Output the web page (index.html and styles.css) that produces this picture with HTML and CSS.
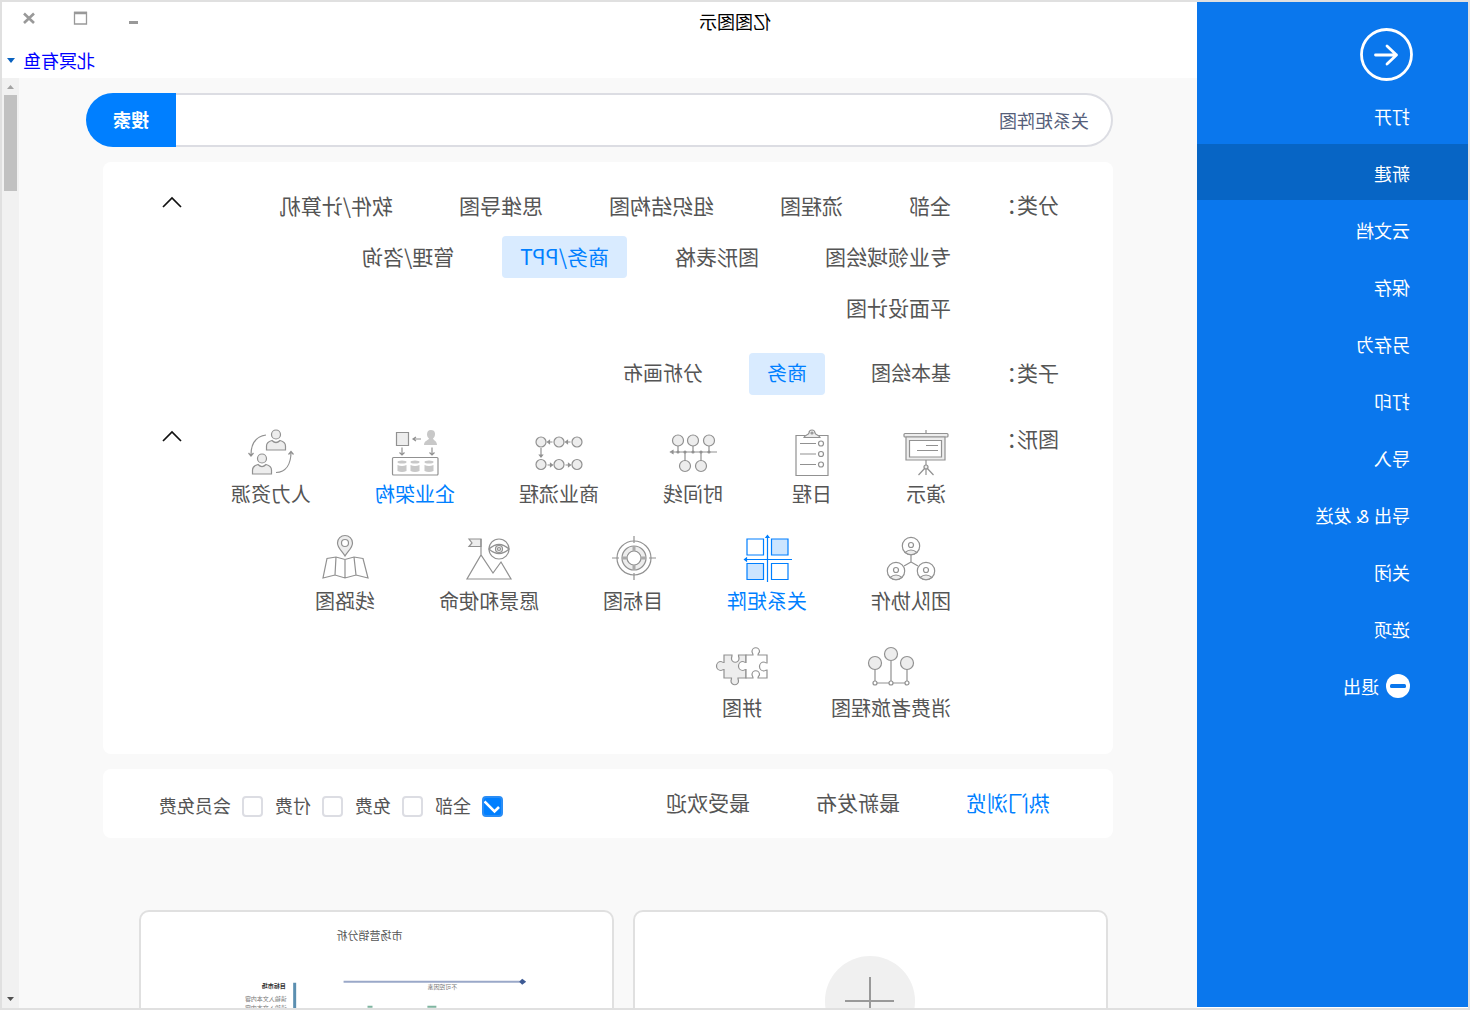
FILE: index.html
```html
<!DOCTYPE html>
<html lang="zh-CN">
<head>
<meta charset="utf-8">
<title>亿图图示</title>
<link rel="stylesheet" href="styles.css">
</head>
<body>
<div class="window">
  <nav class="sidebar" aria-label="文件">
    <button class="back" type="button" aria-label="返回">
      <svg viewBox="0 0 53 53" width="53" height="53" fill="none" stroke="#fff" stroke-width="2.800" stroke-linecap="round" stroke-linejoin="round"><circle cx="26.500" cy="26.500" r="25"/><path d="M37.500 27H16.500M26 18l-9.500 9 9.500 9"/></svg>
    </button>
    <a class="menu-item" href="#">打开</a>
    <a class="menu-item active" href="#">新建</a>
    <a class="menu-item" href="#">云文档</a>
    <a class="menu-item" href="#">保存</a>
    <a class="menu-item" href="#">另存为</a>
    <a class="menu-item" href="#">打印</a>
    <a class="menu-item" href="#">导入</a>
    <a class="menu-item" href="#">导出 &amp; 发送</a>
    <a class="menu-item" href="#">关闭</a>
    <a class="menu-item" href="#">选项</a>
    <a class="menu-item" href="#"><svg viewBox="0 0 24 24" width="24" height="24"><circle cx="12" cy="12" r="12" fill="#fff"/><rect x="4" y="10" width="16" height="4" rx="1.500" fill="#0a77ed"/></svg>退出</a>
  </nav>

  <div class="main">
    <header class="titlebar">
      <div class="title-row">
        <h1 class="title">亿图图示</h1>
        <div class="controls">
          <button type="button" aria-label="最小化"><svg viewBox="0 0 16 16" width="16" height="16"><path d="M3 11h9v3H3z" fill="#999"/></svg></button>
          <button type="button" aria-label="最大化"><svg viewBox="0 0 16 16" width="16" height="16" fill="none" stroke="#999"><path d="M2.500 2.500h12v11.500h-12z" stroke-width="1.300"/><path d="M2 3h13" stroke-width="2.500"/></svg></button>
          <button type="button" aria-label="关闭"><svg viewBox="0 0 16 16" width="16" height="16" fill="none" stroke="#999" stroke-width="2.600"><path d="M3 3.500l10 9.500M13 3.500L3 13"/></svg></button>
        </div>
      </div>
      <div class="user-row">
        <a class="user" href="#">北冥有鱼</a>
        <svg viewBox="0 0 8 5" width="8" height="5"><path d="M0 0h8L4 5z" fill="#0a62c0"/></svg>
      </div>
    </header>

    <div class="viewport">
      <main class="content">
        <form class="search">
          <input class="search-input" type="text" value="关系矩阵图" aria-label="搜索模板">
          <button class="search-button" type="button">搜索</button>
        </form>

        <section class="panel filters">
          <div class="filter-row">
            <h2 class="filter-label">分类：</h2>
            <div class="chips">
              <button class="chip" type="button">全部</button>
              <button class="chip" type="button">流程图</button>
              <button class="chip" type="button">组织结构图</button>
              <button class="chip" type="button">思维导图</button>
              <button class="chip" type="button">软件/计算机</button>
              <button class="chip" type="button">专业领域绘图</button>
              <button class="chip" type="button">图形表格</button>
              <button class="chip selected" type="button">商务/PPT</button>
              <button class="chip" type="button">管理/咨询</button>
              <button class="chip" type="button">平面设计图</button>
            </div>
            <button class="fold" type="button" aria-label="收起分类"><svg viewBox="0 0 20 12" width="20" height="12" fill="none" stroke="#111" stroke-width="1.700"><path d="M1 11l9-9 9 9"/></svg></button>
          </div>

          <div class="filter-row">
            <h2 class="filter-label">子类：</h2>
            <div class="chips small">
              <button class="chip" type="button">基本绘图</button>
              <button class="chip selected" type="button">商务</button>
              <button class="chip" type="button">分析画布</button>
            </div>
          </div>

          <div class="filter-row">
            <h2 class="filter-label">图形：</h2>
            <div class="shapes">
              <button class="shape" type="button">
                <svg class="icon" viewBox="0 0 50 50"><path d="M25 2v4"/><rect x="3" y="5.500" width="44" height="3.500" rx="1" class="soft"/><path class="soft" d="M6 9h39v23H6z"/><path fill="#fff" d="M9.500 12.500h32v16.500h-32z"/><path d="M13 17.500h12M13 22.500h21M25 32v15M25 39l-7.500 8M25 39l7.500 8"/><circle class="soft" cx="25" cy="39" r="2"/></svg>演示</button>
              <button class="shape" type="button">
                <svg class="icon" viewBox="0 0 50 50"><path d="M9 7.500h32v40H9z"/><path class="soft" d="M17 9.500c1-3 4-2 5-4.500a3 3 0 0 1 6 0c1 2.500 4 1.500 5 4.500z"/><circle cx="25" cy="5" r="1"/><circle cx="16" cy="15.500" r="2.500"/><circle cx="16" cy="26" r="2.500"/><circle cx="16" cy="36.500" r="2.500"/><path d="M21 15.500h16M21 26h16M21 36.500h16"/></svg>日程</button>
              <button class="shape" type="button">
                <svg class="icon" viewBox="0 0 50 50"><path d="M1 24h45M9 18v6M25 18v6M40 18v6M17 24v9M33 24v9"/><g class="soft"><circle cx="9" cy="12.500" r="5.500"/><circle cx="25" cy="12.500" r="5.500"/><circle cx="40" cy="12.500" r="5.500"/><circle cx="17" cy="38" r="5.500"/><circle cx="33" cy="38" r="5.500"/></g><g class="solid"><circle cx="9" cy="24" r="1"/><circle cx="17" cy="24" r="1"/><circle cx="25" cy="24" r="1"/><circle cx="33" cy="24" r="1"/><circle cx="40" cy="24" r="1"/><path d="M45 22.500l2.500 1.500-2.500 1.500z"/></g></svg>时间线</button>
              <button class="shape" type="button">
                <svg class="icon" viewBox="0 0 50 50"><g class="soft"><circle cx="7" cy="14" r="5"/><circle cx="25" cy="14" r="5"/><circle cx="43" cy="14" r="5"/><circle cx="7" cy="36.500" r="5"/><circle cx="25" cy="36.500" r="5"/><circle cx="43" cy="36.500" r="5"/></g><path d="M13.500 14h4M31.500 14h4M43 20v7M36.500 37h-4M18.500 37h-4"/><g class="solid"><path d="M16.500 12.500l2 1.500-2 1.500zM34.500 12.500l2 1.500-2 1.500zM41.500 27h3L43 29zM33.500 35.500l-2 1.500 2 1.500zM15.500 35.500l-2 1.500 2 1.500z"/></g></svg>商业流程</button>
              <button class="shape linked" type="button">
                <svg class="icon" viewBox="0 0 50 50"><path class="soft" d="M31.500 4.500h12v13h-12z"/><path d="M19 11h7M24 9l3 2-3 2M38 19.500v7M35.500 24.500L38 27l2.500-2.500M8 19.500v7M5.500 24.500L8 27l2.500-2.500"/><rect x="2" y="29.500" width="45.500" height="17.500" rx="1"/><g class="shade"><path d="M9 2c3 0 4 2 4 4.500 0 2-1 3-2 4 0 1.500 5 2 5 6.500H3c0-4 4-5 4-6.500C5 9 5 7 5 5.500 5 3 7 2 9 2z"/><ellipse cx="11" cy="34" rx="4.500" ry="1.500"/><ellipse cx="25" cy="34" rx="4.500" ry="1.500"/><ellipse cx="38" cy="34" rx="4.500" ry="1.500"/><path d="M6.500 37q4.500 2 9 0v6q-4.500 2-9 0zM20.500 37q4.500 2 9 0v6q-4.500 2-9 0zM33.500 37q4.500 2 9 0v6q-4.500 2-9 0z"/></g></svg>企业架构</button>
              <button class="shape" type="button">
                <svg class="icon" viewBox="0 0 50 50"><g class="soft"><circle cx="20" cy="6.500" r="4.500"/><circle cx="34" cy="30.500" r="4.500"/><path d="M10.500 22v-4c0-3.500 2-4.500 5.500-5.500q4 4 8 0c3.500 1 5.500 2 5.500 5.500v4z"/><path d="M24.500 46v-4c0-3.500 2-4.500 5.500-5.500q4 4 8 0c3.500 1 5.500 2 5.500 5.500v4z"/></g><path d="M30 7c10 1.500 15 9 15 20M42.500 25l2.500 3 2.500-3M20 44.500C10 44 5 36 5 24M2.500 26.500L5 23.500l2.500 3"/></svg>人力资源</button>
              <button class="shape" type="button">
                <svg class="icon" viewBox="0 0 50 50"><path d="M25 20v7l-7 4M25 27l7 4"/><g id="member"><circle cx="25" cy="11" r="8.700"/><circle cx="25" cy="10" r="2.500"/><path class="soft" d="M19 17.500q6-5 12 0-6 4.500-12 0z"/></g><use href="#member" x="-15" y="25"/><use href="#member" x="15" y="25"/></svg>团队协作</button>
              <button class="shape selected" type="button">
                <svg class="icon" viewBox="0 0 50 50"><path class="tint" d="M4 4h16.500v16H4zM28.500 28.500H45V44.500H28.500z"/><path d="M28.500 4H45v16H28.500zM4 28.500h16.500v16H4zM0 24.500h46M24.500 2v45"/><path class="solid" d="M45.500 23l2 1.500-2 1.500zM23 2.500l1.500-2 1.500 2z"/></svg>关系矩阵</button>
              <button class="shape" type="button">
                <svg class="icon" viewBox="0 0 50 50"><circle cx="24" cy="23" r="17"/><circle cx="24" cy="23" r="9.500" stroke="#ededed" stroke-width="5"/><circle cx="24" cy="23" r="12"/><circle cx="24" cy="23" r="7"/><path d="M24 11v5M24 30v5M12 23h5M31 23h5" stroke="#aaa" stroke-width="3"/><path d="M24 1v7M24 38v7M2 23h7M39 23h7"/></svg>目标图</button>
              <button class="shape" type="button">
                <svg class="icon" viewBox="0 0 50 50"><circle cx="15" cy="14" r="10"/><path d="M5 14q10-9 20 0-10 9-20 0z"/><circle class="soft" cx="15" cy="14" r="3.500"/><circle cx="15" cy="14" r="1.500"/><path class="soft" d="M33 4h12l-3 4 3 3.500H33z"/><path d="M33 4v16M47 44H3l10-17 8 11 12-18z"/></svg>愿景和使命</button>
              <button class="shape" type="button">
                <svg class="icon" viewBox="0 0 50 50"><path class="soft" d="M25 21c-3-5-7.500-8-7.500-13a7.500 7.500 0 0 1 15 0c0 5-4.500 8-7.500 13z"/><circle cx="25" cy="8" r="3.500" fill="#fff"/><path d="M7 23.500l9-1.500 9 2.500 9-2.500 9 1.500L47 43l-12-3-10 3-11-3-12 3zM16 22l-2 18M25 24.500V43M34 22l1 18"/></svg>线路图</button>
              <button class="shape" type="button">
                <svg class="icon" viewBox="0 0 50 50"><path d="M9 27v12M25 18.500V39M41 27v12M11 41h12M27 41h12"/><g class="soft"><circle cx="9" cy="21" r="6.500"/><circle cx="25" cy="12" r="6.500"/><circle cx="41" cy="21" r="6.500"/></g><circle cx="9" cy="41" r="2"/><circle cx="25" cy="41" r="2"/><circle cx="41" cy="41" r="2"/></svg>消费者旅程图</button>
              <button class="shape" type="button">
                <svg class="icon" viewBox="2 0 50 50"><path class="soft" d="M23 13h7.500c0 2-.5 2-.5 3.500a3.700 3.700 0 0 0 7.500 0c0-1.500-.5-1.500-.5-3.500h8v7.500c2 0 2-1 3-1a4 4 0 0 1 0 9c-1 0-1-1-3-1V36h-7.500c0 2 .5 2 .5 3a3.700 3.700 0 0 1-7.500 0c0-1 .5-1 .5-3H23z"/><path fill="#fff" d="M2 13h9c0-2-1.500-2-1.500-3.500a3.700 3.700 0 0 1 7.500 0c0 1.500-1 1.500-1 3.500h7v7.500c2 0 2-1 3-1a4 4 0 0 1 0 9c-1 0-1-1-3-1V36h-7c0-2 1-2 1-3.500a3.700 3.700 0 0 0-7.500 0c0 1.500 1.500 1.500 1.500 3.500H2v-8c2 0 2 1 3 1a4 4 0 0 0 0-9c-1 0-1 1-3 1z"/></svg>拼图</button>
            </div>
            <button class="fold" type="button" aria-label="收起图形"><svg viewBox="0 0 20 12" width="20" height="12" fill="none" stroke="#111" stroke-width="1.700"><path d="M1 11l9-9 9 9"/></svg></button>
          </div>
        </section>

        <section class="panel sortbar">
          <div class="tabs">
            <a class="tab selected" href="#">热门浏览</a>
            <a class="tab" href="#">最新发布</a>
            <a class="tab" href="#">最受欢迎</a>
          </div>
          <div class="checks">
            <label><input type="checkbox" checked><span>全部</span></label>
            <label><input type="checkbox"><span>免费</span></label>
            <label><input type="checkbox"><span>付费</span></label>
            <label><input type="checkbox"><span>会员免费</span></label>
          </div>
        </section>

        <section class="cards">
          <button class="card blank" type="button" aria-label="新建空白画布">
            <svg viewBox="0 0 90 90" width="90" height="90"><circle cx="45" cy="45" r="45" fill="#f0f0f0"/><path d="M45 21v49M21 45h49" stroke="#999" stroke-width="2"/></svg>
          </button>
          <a class="card" href="#" aria-label="市场营销分析">
            <svg class="thumb" viewBox="0 0 472 280">
              <text x="243" y="28" font-size="11" text-anchor="middle" fill="#555">市场营销分析</text>
              <path d="M90 70h179" stroke="#9aa8c8" stroke-width="2"/>
              <path d="M86 70l4-3 3 3-3 3z" fill="#3d5a94"/>
              <text x="170" y="77" font-size="6" text-anchor="middle" fill="#777">不可控因素</text>
              <path d="M318 71v140" stroke="#5b8fb0" stroke-width="3"/>
              <text x="327" y="76" font-size="6" font-weight="700" fill="#333">目标市场</text>
              <text x="326" y="89" font-size="6" fill="#777">请输入文本内容</text>
              <text x="326" y="98" font-size="6" fill="#777">请输入文本内容</text>
              <path d="M176 95h9M240 95h5" stroke="#7fb5a0" stroke-width="2"/>
            </svg>
          </a>
        </section>
      </main>

      <div class="scrollbar" aria-hidden="true">
        <svg viewBox="0 0 17 17" width="17" height="17"><path d="M5 11h7L8.500 7z" fill="#a3a3a3"/></svg>
        <div class="track"><div class="thumb-bar"></div></div>
        <svg viewBox="0 0 17 17" width="17" height="17"><path d="M5 6h7l-3.500 4z" fill="#505050"/></svg>
      </div>
    </div>
  </div>
</div>
</body>
</html>
```
FILE: styles.css
```css
:root {
  --blue: #0a77ed;
  --accent: #007fff;
  --text: #555;
  --line: #e0e0e0;
  --sidebar-width: 271px;
}

* { box-sizing: border-box; }

/* The whole window is shown as a mirror image. */
body {
  margin: 0;
  transform: scaleX(-1);
  font-family: "Noto Sans CJK SC", "Noto Sans", sans-serif;
  color: var(--text);
}

button {
  padding: 0;
  border: 0;
  background: none;
  font: inherit;
  color: inherit;
}

a { color: inherit; text-decoration: none; }
svg { display: block; flex: none; }

.window {
  display: flex;
  height: 100vh;
  overflow: hidden;
  border: 2px solid var(--line);
  background: #fff;
}

/* Sidebar */
.sidebar {
  display: flex;
  flex: none;
  flex-direction: column;
  gap: 1px;
  width: var(--sidebar-width);
  margin-bottom: 1px;
  padding-top: 26px;
  background: var(--blue);
  color: #fff;
}

.back { align-self: flex-start; margin: 0 0 5px 55px; }

.menu-item {
  display: flex;
  align-items: center;
  gap: 7px;
  height: 56px;
  padding: 2px 0 0 58px;
  font-family: "Open Sans", "Noto Sans CJK SC", sans-serif;
  font-size: 18px;
}

.menu-item.active { background: #0765c5; }

/* Title bar */
.main {
  display: flex;
  flex: 1;
  flex-direction: column;
  min-width: 0;
}

.titlebar { flex: none; height: 76px; }

.title-row { display: flex; height: 38px; }

.title {
  flex: 1;
  margin: 0;
  font-size: 18px;
  font-weight: 400;
  line-height: 38px;
  text-align: center;
  color: #000;
}

.controls {
  display: flex;
  align-items: flex-start;
  justify-content: space-between;
  width: var(--sidebar-width);
  padding: 8px 19px 0 132px;
}

.user-row {
  display: flex;
  align-items: center;
  justify-content: flex-end;
  gap: 8px;
  height: 40px;
  padding-right: 5px;
}

.user { font-size: 18px; line-height: 40px; color: #00f; }

/* Scrolling area */
.viewport {
  display: flex;
  flex: 1;
  min-height: 0;
  background: #f9f9f9;
}

.content {
  flex: 1;
  min-width: 0;
  overflow: hidden;
  padding: 15px 84px 0;
}

.scrollbar {
  display: flex;
  flex: none;
  flex-direction: column;
  width: 17px;
  background: #f1f1f1;
}

.track { flex: 1; padding: 0 2px; }
.thumb-bar { height: 96px; background: #c1c1c1; }

.search {
  display: flex;
  height: 54px;
  margin: 0 -17px 15px 0;
}

.search-input {
  flex: 1;
  min-width: 0;
  padding: 0 22px;
  border: 2px solid #dcdde3;
  border-right: 0;
  border-radius: 27px 0 0 27px;
  background: #fff;
  font: inherit;
  font-size: 18px;
  color: #56607a;
}

.search-button {
  width: 90px;
  padding-bottom: 2px;
  border-radius: 0 27px 27px 0;
  background: var(--accent);
  font-size: 18px;
  font-weight: 700;
  color: #fff;
}

.panel { border-radius: 8px; background: #fff; }

/* Filters */
.filters {
  display: flex;
  flex-direction: column;
  gap: 24px;
  padding: 23px 59px 34px 54px;
}

.filter-row { display: flex; align-items: flex-start; }

.filter-label {
  flex: none;
  width: 90px;
  margin: 0;
  font-size: 21px;
  font-weight: 400;
  line-height: 39px;
}

.chips {
  display: flex;
  flex: 1;
  flex-wrap: wrap;
  gap: 9px 30px;
}

.chip {
  height: 42px;
  padding: 0 18px 3px;
  border-radius: 4px;
  font-size: 21px;
}

.chips.small { column-gap: 28px; }
.chips.small .chip { font-size: 20px; }
.chip.selected { background: #d9ebff; color: var(--accent); }

.fold { margin: 11px 0 0 18px; }

.shapes {
  display: flex;
  flex: 1;
  flex-wrap: wrap;
  gap: 29px 64px;
  padding: 9px 0 0 18px;
}

.shape {
  display: flex;
  flex-direction: column;
  align-items: center;
  gap: 4px;
  font-size: 20px;
  line-height: 24px;
}

.shape.selected, .shape.linked { color: var(--accent); }

.icon {
  width: 50px;
  height: 50px;
  overflow: visible;
  fill: none;
  stroke: #919191;
  stroke-width: 1.2;
}

.icon .soft { fill: #ededed; }
.icon .solid { fill: #919191; }
.icon .shade { fill: #c8c8c8; stroke: none; }
.icon .tint { fill: #cce5ff; }
.shape.selected .icon { stroke: var(--accent); }
.shape.selected .solid { fill: var(--accent); }

/* Sorting and price */
.sortbar {
  display: flex;
  justify-content: space-between;
  height: 69px;
  margin: 15px 0 72px;
  padding: 0 56px 0 63px;
}

.tabs { display: flex; gap: 66px; font-size: 21px; line-height: 66px; }
.tab.selected { color: var(--accent); }

.checks { display: flex; gap: 12px; padding-top: 5px; font-size: 18px; }
.checks label { display: flex; align-items: center; gap: 11px; }
.checks span { padding-bottom: 3px; }

.checks input {
  width: 21px;
  height: 21px;
  margin: 0;
  appearance: none;
  border: 2px solid #dcdde3;
  border-radius: 4px;
  background: #fff;
}

.checks input:checked {
  border-color: #2a8df5;
  background: var(--accent) url("data:image/svg+xml,%3Csvg xmlns='http://www.w3.org/2000/svg' viewBox='0 0 17 17'%3E%3Cpath d='M2 9l4.500 4.500L16.500 3.500' fill='none' stroke='white' stroke-width='2.600'/%3E%3C/svg%3E") center / 17px 17px no-repeat;
}

/* Template cards */
.cards {
  display: grid;
  grid-template-columns: 1fr 1fr;
  gap: 19px;
  padding: 0 36px 0 5px;
}

.card {
  height: 330px;
  overflow: hidden;
  border: 2px solid var(--line);
  border-radius: 10px;
  background: #fff;
}

.blank { display: flex; justify-content: center; padding-top: 44px; }
.thumb { width: 100%; }
```
